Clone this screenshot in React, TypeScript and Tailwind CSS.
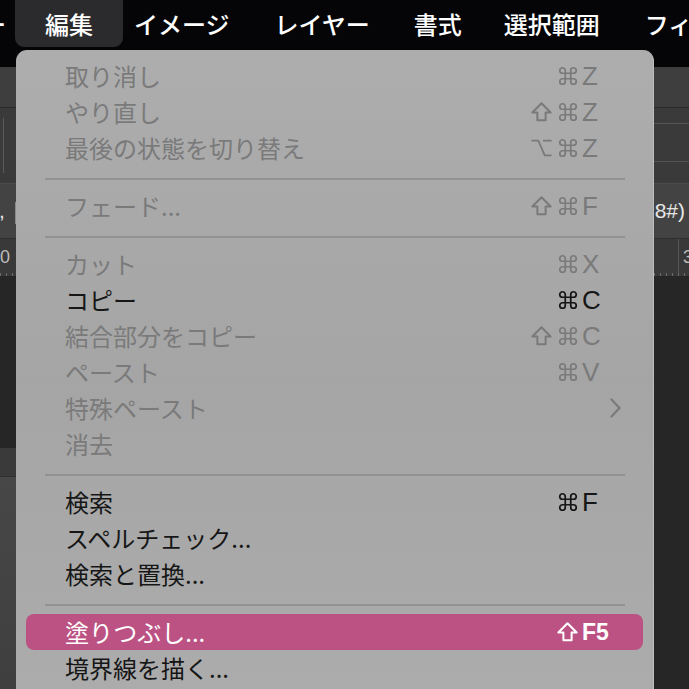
import React from "react";

type Mod = "cmd" | "shift" | "opt";
type Item =
  | { sep: true }
  | {
      sep?: false;
      label: string;
      mods?: Mod[];
      k?: string;
      disabled?: boolean;
      submenu?: boolean;
      active?: boolean;
    };

const items: Item[] = [
  { label: "取り消し", mods: ["cmd"], k: "Z", disabled: true },
  { label: "やり直し", mods: ["shift", "cmd"], k: "Z", disabled: true },
  { label: "最後の状態を切り替え", mods: ["opt", "cmd"], k: "Z", disabled: true },
  { sep: true },
  { label: "フェード...", mods: ["shift", "cmd"], k: "F", disabled: true },
  { sep: true },
  { label: "カット", mods: ["cmd"], k: "X", disabled: true },
  { label: "コピー", mods: ["cmd"], k: "C" },
  { label: "結合部分をコピー", mods: ["shift", "cmd"], k: "C", disabled: true },
  { label: "ペースト", mods: ["cmd"], k: "V", disabled: true },
  { label: "特殊ペースト", submenu: true, disabled: true },
  { label: "消去", disabled: true },
  { sep: true },
  { label: "検索", mods: ["cmd"], k: "F" },
  { label: "スペルチェック..." },
  { label: "検索と置換..." },
  { sep: true },
  { label: "塗りつぶし...", mods: ["shift"], k: "F5", active: true },
  { label: "境界線を描く..." },
];

function ModIcon({ m }: { m: Mod }) {
  if (m === "cmd")
    return (
      <svg width="22" height="22" viewBox="0 0 24 24" fill="none" stroke="currentColor" strokeWidth="1.9" strokeLinecap="round" strokeLinejoin="round">
        <path d="M15 6v12a3 3 0 1 0 3-3H6a3 3 0 1 0 3 3V6a3 3 0 1 0-3 3h12a3 3 0 1 0-3-3" />
      </svg>
    );
  if (m === "shift")
    return (
      <svg width="23" height="22" viewBox="0 0 24 24" fill="none" stroke="currentColor" strokeWidth="2.2" strokeLinejoin="round">
        <path d="M12 2.5 L22 12.5 H16.5 V21 H7.5 V12.5 H2 Z" />
      </svg>
    );
  return (
    <svg width="23" height="22" viewBox="0 0 24 24" fill="none" stroke="currentColor" strokeWidth="2" strokeLinecap="square">
      <path d="M2 4h6.5l7 16H22" />
      <path d="M14.5 4H22" />
    </svg>
  );
}

function Row({ it }: { it: Exclude<Item, { sep: true }> }) {
  const color = it.active ? "text-white" : it.disabled ? "text-[#7a7a7a]" : "text-[#161616]";
  return (
    <div
      className={`mx-[10px] h-[36px] flex items-center rounded-[8px] pl-[39px] ${color} ${
        it.active ? "bg-[#bb5283]" : ""
      }`}
    >
      <span className="flex-1 text-[24px] leading-[36px] whitespace-nowrap">{it.label}</span>
      {it.mods && (
        <div className="flex items-center gap-[4px] mr-[3px]">
          {it.mods.map((m, i) => (
            <ModIcon key={i} m={m} />
          ))}
        </div>
      )}
      {it.submenu ? (
        <div className="w-[61px] flex justify-end pr-[22px]">
          <svg width="11" height="20" viewBox="0 0 11 20" fill="none" stroke="currentColor" strokeWidth="2.2" strokeLinecap="round" strokeLinejoin="round">
            <path d="M1.5 1.5 L9.5 10 L1.5 18.5" />
          </svg>
        </div>
      ) : (
        <span
          className={`w-[61px] font-['Liberation_Sans',sans-serif] leading-[36px] ${
            it.active ? "text-[23px] font-semibold" : "text-[26px]"
          }`}
        >
          {it.k ?? ""}
        </span>
      )}
    </div>
  );
}

export default function App() {
  return (
    <div className="relative w-[689px] h-[689px] overflow-hidden bg-[#262626] font-['Noto_Sans_CJK_JP','Noto_Sans',sans-serif] flex flex-col">
      {/* top menu bar */}
      <div className="h-[67px] shrink-0 bg-[#050507]">
        <div className="h-[47px] flex items-center text-white text-[24px] font-medium whitespace-nowrap">
          <span className="-ml-[18px]">ー</span>
          <div className="ml-[9px] h-[47px] px-[30px] flex items-center rounded-b-[9px] bg-[#2b2b2e]">編集</div>
          <span className="ml-[11px]">イメージ</span>
          <span className="ml-[45px]">レイヤー</span>
          <span className="ml-[44px]">書式</span>
          <span className="ml-[42px]">選択範囲</span>
          <span className="ml-[45px]">フィルター</span>
        </div>
      </div>
      {/* toolbar */}
      <div className="h-[41px] shrink-0 bg-[#3e3e3e] border-b border-[#2a2a2a]" />
      {/* options bar */}
      <div className="h-[76px] shrink-0 bg-[#3a3a3a] border-b border-[#4b4b4b] flex">
        <div className="w-[3px]" />
        <div className="mt-[10px] h-[55px] w-px bg-[#5a5a5a]" />
        <div className="flex-1" />
        <div className="w-[40px] flex flex-col">
          <div className="h-[16px] border-b border-[#555]" />
          <div className="h-[38px] border-b border-[#555]" />
        </div>
      </div>
      {/* document tab row */}
      <div className="h-[55px] shrink-0 bg-[#434343] border-b border-[#2e2e2e] flex items-center justify-between text-[21px] text-[#e6e6e6] font-['Liberation_Sans',sans-serif] whitespace-nowrap">
        <span className="-ml-[1px]">
          , <span className="inline-block w-[4px] h-[22px] bg-[#8a8a8a] align-middle ml-[4px]" />
        </span>
        <span className="mr-[4px]">8#)</span>
      </div>
      {/* ruler */}
      <div className="h-[37px] shrink-0 bg-[#393939] flex items-center justify-between text-[18px] text-[#bdbdbd] font-['Liberation_Sans',sans-serif] relative">
        <span className="ml-[0px]">0</span>
        <div className="flex items-stretch h-full">
          <div className="w-px bg-[#555] mr-[4px]" />
          <span className="self-center mr-[-4px]">3</span>
        </div>
        <div className="absolute left-0 right-0 bottom-0 h-[3px] bg-[repeating-linear-gradient(90deg,#6a6a6a_0_1px,transparent_1px_6px)]" />
      </div>
      {/* main area */}
      <div className="flex-1 flex">
        <div className="w-[40px] flex flex-col">
          <div className="h-[172px] bg-[#262626]" />
          <div className="h-[29px] bg-[#3a3a3a] border-b border-[#2f2f2f]" />
          <div className="flex-1 bg-gradient-to-b from-[#474747] to-[#3f3f3f]" />
        </div>
        <div className="flex-1 bg-[#262626]" />
      </div>

      {/* dropdown menu */}
      <div className="absolute left-[16px] top-[50px] w-[638px] bottom-[-20px] rounded-t-[11px] bg-gradient-to-b from-[#adadae] via-[#a5a5a5] to-[#acacac] border-r border-[#bdbdbd] pt-[8px]">
        {items.map((it, i) =>
          "sep" in it && it.sep ? (
            <div key={i} className="pt-[12px] pb-[8px] pl-[29px] pr-[28px]">
              <div className="h-[2px] bg-[#929292]" />
            </div>
          ) : (
            <Row key={i} it={it as Exclude<Item, { sep: true }>} />
          )
        )}
      </div>
    </div>
  );
}
